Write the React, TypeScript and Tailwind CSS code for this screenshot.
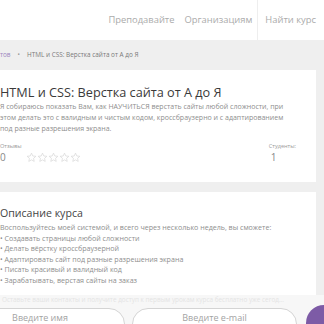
import React from "react";

const font = { fontFamily: '"Open Sans", "Liberation Sans", sans-serif' };

function Star() {
  return (
    <svg width="11" height="11" viewBox="0 0 24 24" fill="none" stroke="#d6d6d6" strokeWidth="1.5" strokeLinejoin="round">
      <path d="M12 2.5l2.9 6.2 6.6.7-5 4.5 1.4 6.6L12 17.2l-5.9 3.3 1.4-6.6-5-4.5 6.6-.7z" />
    </svg>
  );
}

export default function App() {
  return (
    <div className="relative h-[324px] w-[324px] overflow-hidden bg-[#efefef]" style={font}>
      <header className="flex h-[40px] items-stretch justify-end bg-white text-[9.4px] text-[#ababab]">
        <div className="flex items-center gap-[10px] pr-[5px]">
          <span>Преподавайте</span>
          <span>Организациям</span>
        </div>
        <div className="flex items-center border-l border-[#eeeeee] pl-[7px] pr-[8px]">
          <span>Найти курс</span>
        </div>
      </header>

      <div className="flex h-[30px] items-center gap-[7px] text-[6.4px] text-[#7a7a7a]">
        <span className="text-[#9b86c0]">тов</span>
        <span className="text-[#9a9a9a]">•</span>
        <span>HTML и CSS: Верстка сайта от А до Я</span>
      </div>

      <div className="-ml-[20px] mr-[8px] flex flex-col gap-[10px]">
        <section className="h-[112px] bg-white pl-[20px] pr-[10px] pt-[14px]">
          <h1 className="text-[12.7px] leading-[16px] text-[#3a3a3a]">HTML и CSS: Верстка сайта от А до Я</h1>
          <p className="mt-[1px] pr-[14px] text-[7px] leading-[11px] text-[#8e8e8e]">
            Я собираюсь показать Вам, как НАУЧИТЬСЯ верстать сайты любой сложности, при этом делать это с валидным и чистым кодом, кроссбраузерно и с адаптированием под разные разрешения экрана.
          </p>
          <div className="mt-[8px] flex items-end justify-between pr-[10px]">
            <div>
              <div className="text-[5.6px] leading-[8px] text-[#9a9a9a]">Отзывы</div>
              <div className="flex items-center gap-[20px]">
                <span className="text-[10px] leading-[14px] text-[#888]">0</span>
                <div className="flex">
                  <Star />
                  <Star />
                  <Star />
                  <Star />
                  <Star />
                </div>
              </div>
            </div>
            <div>
              <div className="text-[5.6px] leading-[8px] text-[#9a9a9a]">Студенты:</div>
              <div className="pl-[2px] text-[10px] leading-[14px] text-[#888]">1</div>
            </div>
          </div>
        </section>

        <section className="h-[103px] bg-white pl-[20px] pr-[10px] pt-[13px]">
          <h2 className="text-[10.6px] leading-[16px] text-[#444]">Описание курса</h2>
          <div className="mt-[1px] text-[7.1px] leading-[10.6px] text-[#8e8e8e]">
            <p>Воспользуйтесь моей системой, и всего через несколько недель, вы сможете:</p>
            <p>• Создавать страницы любой сложности</p>
            <p>• Делать вёрстку кроссбраузерной</p>
            <p>• Адаптировать сайт под разные разрешения экрана</p>
            <p>• Писать красивый и валидный код</p>
            <p>• Зарабатывать, верстая сайты на заказ</p>
          </div>
        </section>
      </div>

      <div className="absolute bottom-0 left-0 right-0 h-[29px] bg-[#f7f7f7]/95">
        <div className="truncate pl-[2px] pr-[40px] text-[6.4px] leading-[10px] text-[#e4e4e4]">
          Оставьте ваши контакты и получите доступ к первым урокам курса бесплатно уже сегодня
        </div>
        <div className="mt-[3px] -ml-[45px] flex items-start gap-[7px]">
          <div className="flex h-[32px] w-[170px] shrink-0 justify-center rounded-full border border-[#d4d4d4] bg-white pt-[3px] text-[9px] leading-[12px] text-[#a3a3a3]">
            Введите имя
          </div>
          <div className="flex h-[32px] w-[165px] shrink-0 justify-center rounded-full border border-[#d4d4d4] bg-white pt-[3px] text-[9px] leading-[12px] text-[#a3a3a3]">
            Введите e-mail
          </div>
          <div className="-mt-[3px] ml-[2px] h-[36px] w-[36px] shrink-0 rounded-full bg-[#7d5ba6]" />
        </div>
      </div>
    </div>
  );
}
